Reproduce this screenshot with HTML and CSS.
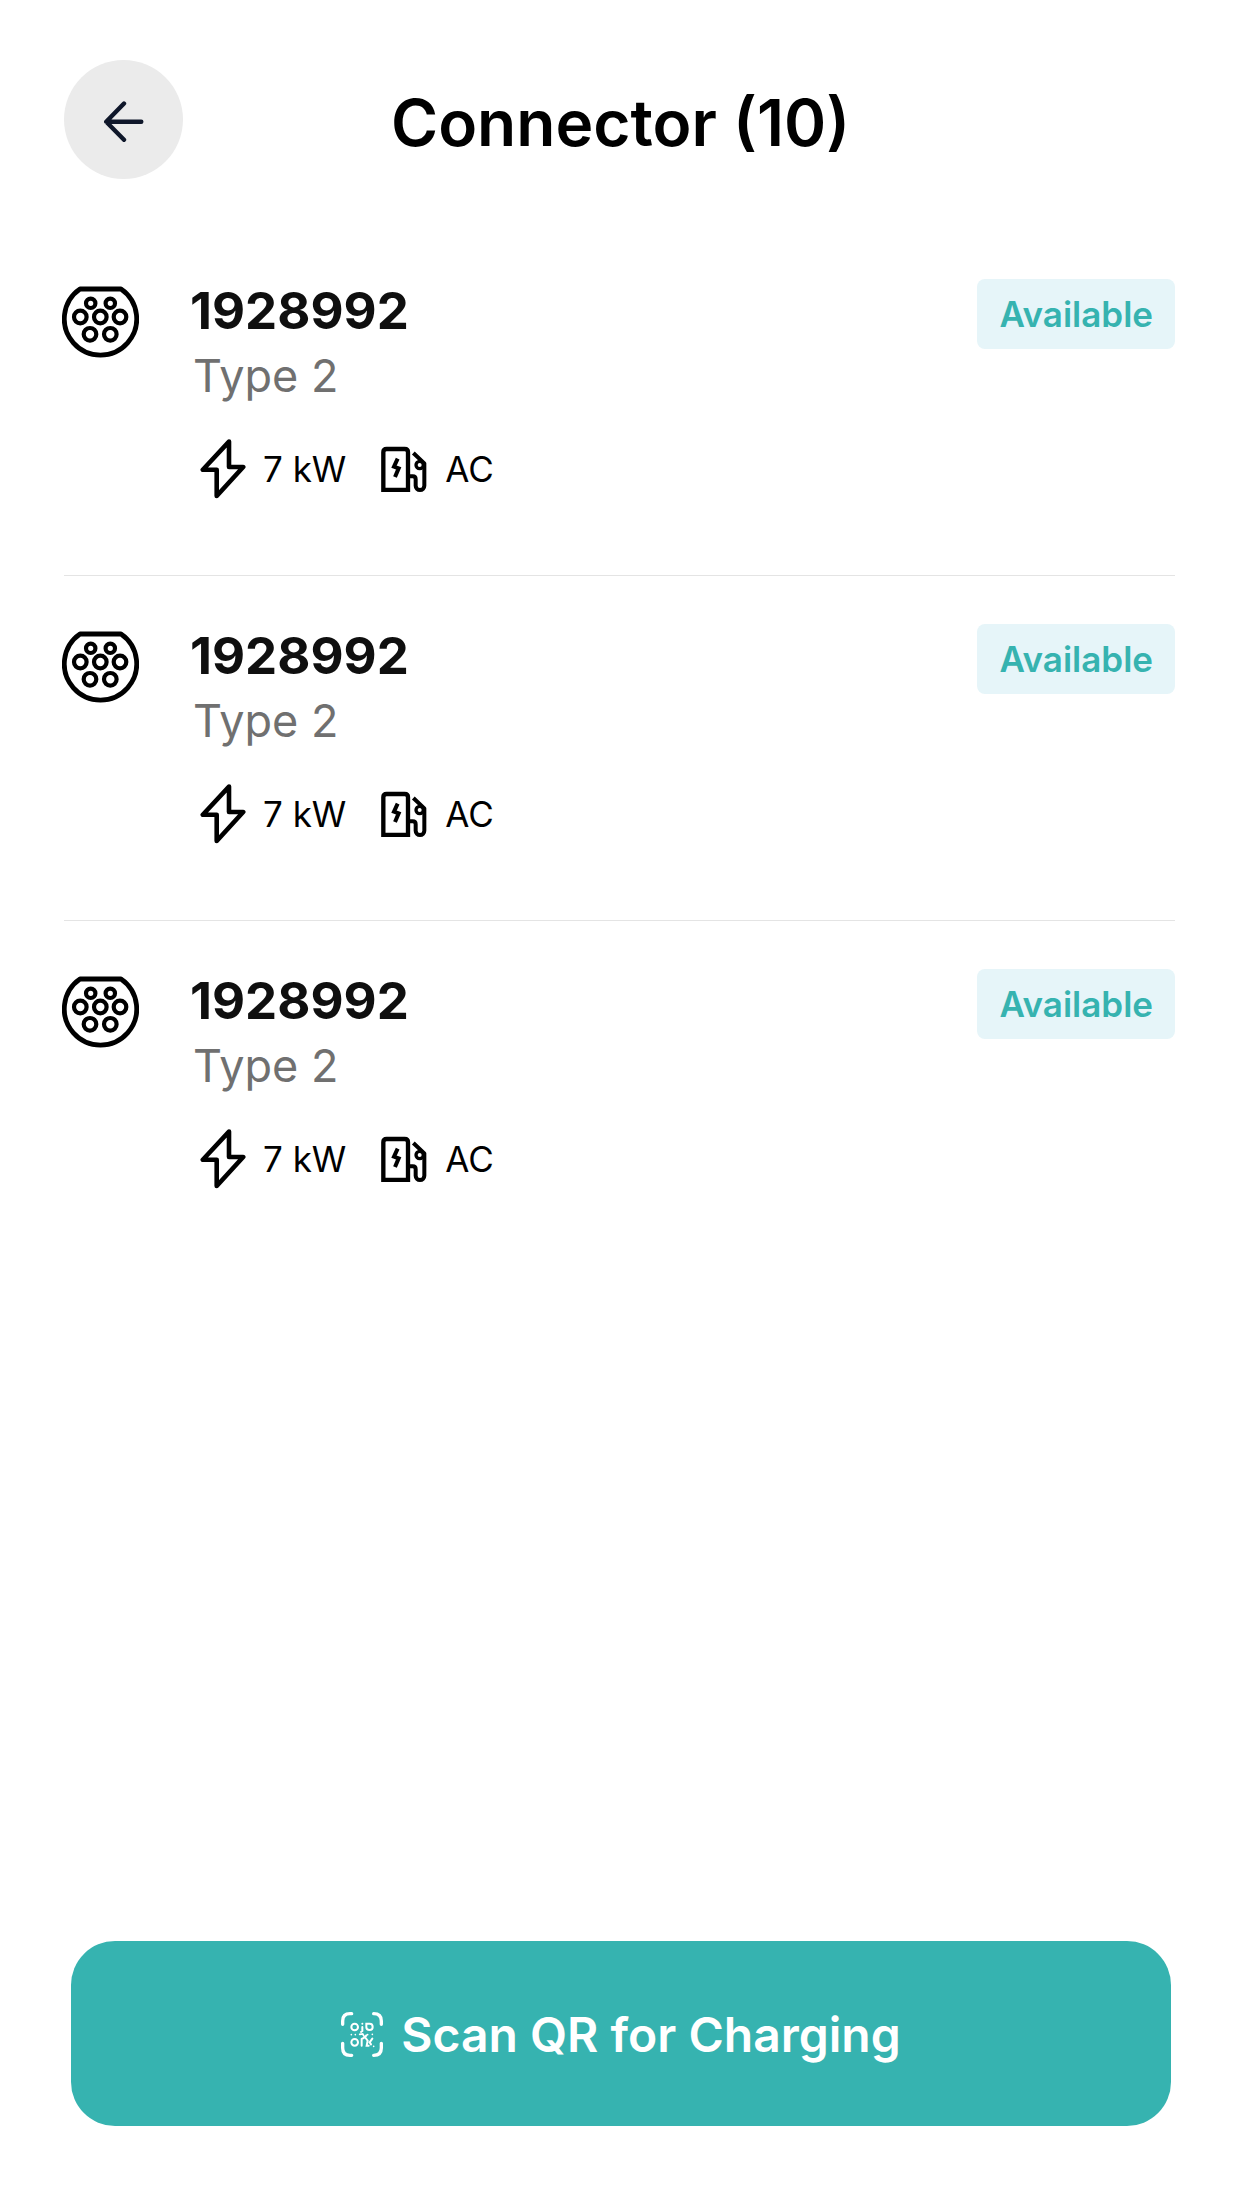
FILE: index.html
```html
<!DOCTYPE html>
<html lang="en">
<head>
    <meta charset="UTF-8">
    <meta name="viewport" content="width=device-width, initial-scale=1.0">
    <title>Connector (10)</title>
    <link rel="stylesheet" href="styles.css">
</head>
<body>
    <!-- Shared icons -->
    <svg class="icon-defs" aria-hidden="true">
        <symbol id="icon-plug" viewBox="0 0 77 72">
            <g fill="none" stroke="currentColor" stroke-width="4.2">
                <path stroke-width="4.8" stroke-linejoin="round" d="M18 3H59A36.2 36.2 0 1 1 18 3Z"/>
                <circle cx="28.7" cy="17.3" r="4.7"/>
                <circle cx="48.3" cy="17.3" r="4.7"/>
                <circle cx="18.3" cy="31" r="6.3"/>
                <circle cx="38.3" cy="31" r="6.3"/>
                <circle cx="58" cy="31" r="6.3"/>
                <circle cx="28" cy="48.3" r="6.3"/>
                <circle cx="48.3" cy="48.3" r="6.3"/>
            </g>
        </symbol>
        <symbol id="icon-bolt" viewBox="0 0 46 60">
            <path fill="none" stroke="currentColor" stroke-width="4.6" stroke-linejoin="round" d="M29 2.6L2.8 30.7H16.7V57L43.2 28H29Z"/>
        </symbol>
        <symbol id="icon-station" viewBox="0 0 138 138">
            <g fill="none" stroke="currentColor" stroke-width="13">
                <path d="M7 132V19Q7 9 17 9H71Q81 9 81 19V132Z"/>
                <path stroke-width="12" stroke-linejoin="round" d="M81 91H95Q104 91 104 100V119A13 13 0 0 0 130 119V52L97 21"/>
                <circle cx="116" cy="57" r="11" stroke-width="10"/>
                <path stroke-width="12" d="M50 38L39 62 53 67 42 93"/>
            </g>
        </symbol>
    </svg>

    <div class="page">
        <header class="header">
            <button type="button" class="back-btn" aria-label="Back">
                <svg width="40" height="44" viewBox="0 0 40 44" fill="none" stroke="currentColor" stroke-width="4.4" stroke-linecap="round" stroke-linejoin="round">
                    <path d="M37.3 23.7H2.5M20 5.5L2.2 23.7 20 41.8"/>
                </svg>
            </button>
            <h1 class="title">Connector (10)</h1>
        </header>

        <ul class="connector-list">
            <li class="connector">
                <svg class="connector-icon"><use href="#icon-plug"/></svg>
                <div class="connector-info">
                    <h2 class="connector-id">1928992</h2>
                    <p class="connector-type">Type 2</p>
                    <div class="specs">
                        <svg class="bolt-icon"><use href="#icon-bolt"/></svg>
                        <span class="power">7 kW</span>
                        <svg class="station-icon"><use href="#icon-station"/></svg>
                        <span>AC</span>
                    </div>
                </div>
                <span class="status">Available</span>
            </li>
            <li class="connector">
                <svg class="connector-icon"><use href="#icon-plug"/></svg>
                <div class="connector-info">
                    <h2 class="connector-id">1928992</h2>
                    <p class="connector-type">Type 2</p>
                    <div class="specs">
                        <svg class="bolt-icon"><use href="#icon-bolt"/></svg>
                        <span class="power">7 kW</span>
                        <svg class="station-icon"><use href="#icon-station"/></svg>
                        <span>AC</span>
                    </div>
                </div>
                <span class="status">Available</span>
            </li>
            <li class="connector">
                <svg class="connector-icon"><use href="#icon-plug"/></svg>
                <div class="connector-info">
                    <h2 class="connector-id">1928992</h2>
                    <p class="connector-type">Type 2</p>
                    <div class="specs">
                        <svg class="bolt-icon"><use href="#icon-bolt"/></svg>
                        <span class="power">7 kW</span>
                        <svg class="station-icon"><use href="#icon-station"/></svg>
                        <span>AC</span>
                    </div>
                </div>
                <span class="status">Available</span>
            </li>
        </ul>

        <footer class="footer">
            <button type="button" class="scan-btn">
                <svg width="42" height="46" viewBox="0 0 126 138" fill="none" stroke="currentColor" stroke-linecap="round">
                    <path stroke-width="10" d="M5 37V27Q5 5 27 5H32M98 5Q121 5 121 27V37M5 94V108Q5 130 27 130H32M98 130Q121 130 121 108V94"/>
                    <g stroke-width="6">
                        <circle cx="41" cy="45" r="10"/>
                        <circle cx="41" cy="91" r="10"/>
                        <path d="M64 45V57L60 60M64 35V35.1"/>
                        <path d="M76 35H86Q95 35 95 45 95 54 86 54 76 54 76 46Z"/>
                        <path stroke-width="5" d="M31 68V68.1M43 68V68.1M56 67L65 66 70 74M80 68V68.1M94 67V67.1M98 103V103.1"/>
                        <path d="M62 82V101M62 81L72 76 76 70M74 78L80 86 77 101 83 101M94 80L86 91 90 97"/>
                    </g>
                </svg>
                Scan QR for Charging
            </button>
        </footer>
    </div>
</body>
</html>
```

FILE: styles.css
```css
* { box-sizing: border-box; margin: 0; padding: 0; }
body { font-family: Inter, "Liberation Sans", sans-serif; background: #fff; color: #000; }
button { border: none; font-family: inherit; cursor: pointer; }
svg { flex: none; }
.icon-defs { display: none; }

.page { display: flex; flex-direction: column; min-height: 100vh; padding: 60px 67px 82px 64px; }

.header { display: grid; grid-template-columns: 119px 1fr 117px; align-items: center; }
.back-btn { display: flex; align-items: center; justify-content: center; width: 119px; height: 119px; border-radius: 50%; background: #ebebeb; color: #0f172a; }
.title { padding-top: 6px; font-size: 64px; line-height: 64px; font-weight: 600; text-align: center; }

.connector-list { list-style: none; margin-top: 52px; }
.connector { display: flex; align-items: flex-start; padding: 48px 0 76px; }
.connector + .connector { border-top: 1px solid #e4e4e4; }
.connector-icon { width: 77px; height: 72px; margin: 7px 51px 0 -2px; }
.connector-info { flex: 1; }
.connector-id { font-size: 51px; line-height: 63px; font-weight: 700; color: #0f0f0f; }
.connector-type { padding: 2px 3px; font-size: 45px; line-height: 64px; color: #707070; }
.specs { display: flex; align-items: center; padding: 29px 0 0 10px; font-size: 35px; line-height: 60px; }
.bolt-icon { width: 46px; height: 60px; margin-right: 17px; }
.station-icon { width: 46px; height: 46px; margin: 0 18px 0 35px; }
.status { padding: 0 22px; border-radius: 8px; background: #e6f5f9; color: #36b3b0; font-size: 35px; line-height: 70px; font-weight: 600; }

.footer { margin-top: auto; padding: 0 4px 0 7px; }
.scan-btn { display: flex; align-items: center; justify-content: center; gap: 18px; width: 100%; padding: 63px 0 61px; border-radius: 44px; background: #36b3b0; color: #fff; font-size: 48px; line-height: 61px; font-weight: 600; }
```
